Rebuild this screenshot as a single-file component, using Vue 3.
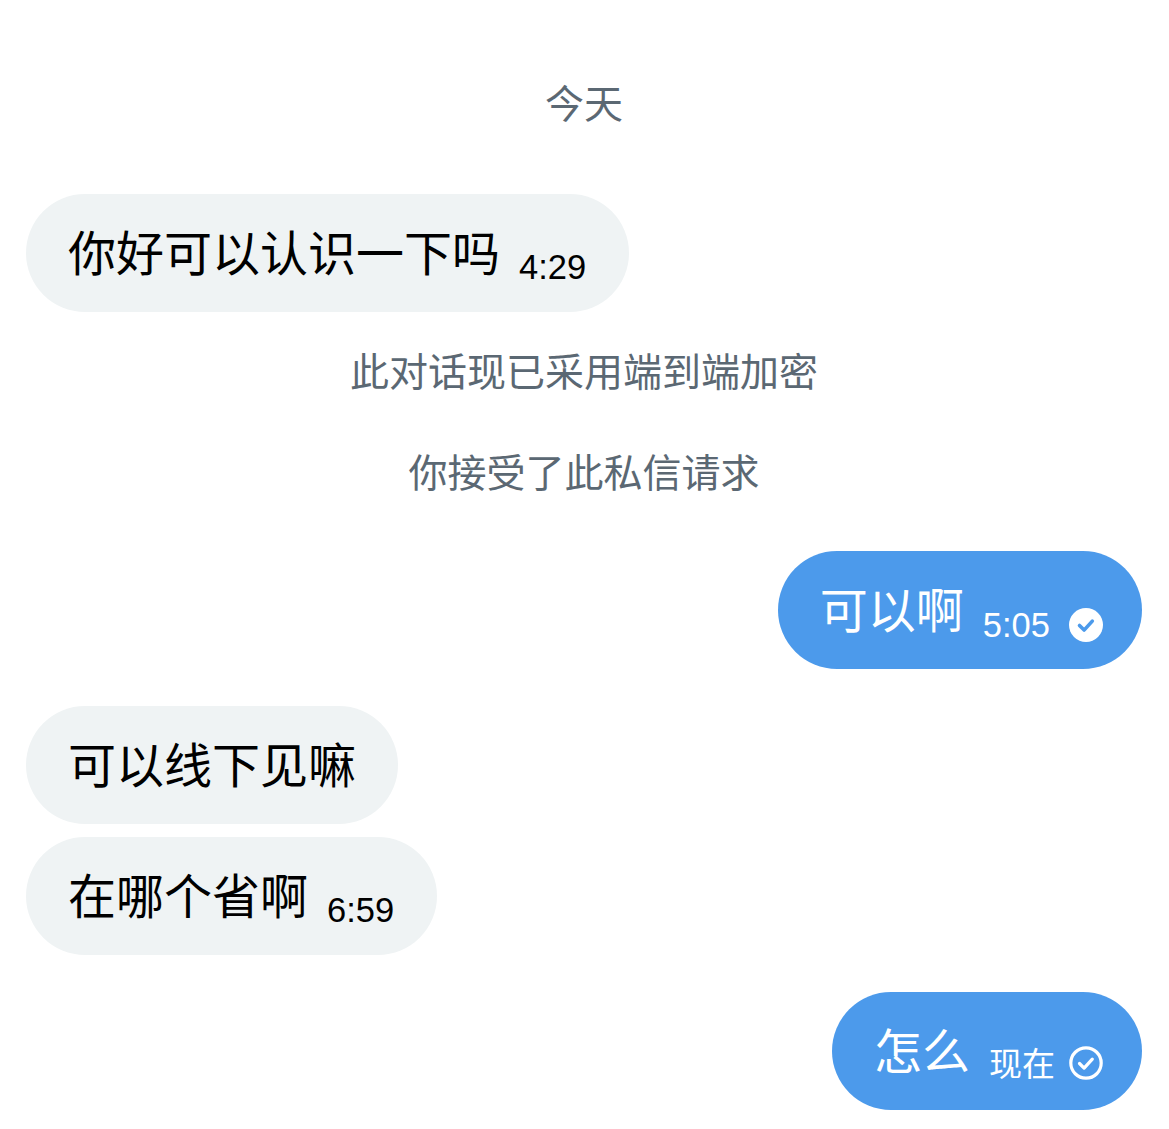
<script setup>
// DM thread: each entry is either a centred system line or a bubble.
const items = [
    { id: 1, kind: "system", text: "今天", gap: 74 },
    { id: 2, kind: "in", text: "你好可以认识一下吗", time: "4:29", gap: 60 },
    { id: 3, kind: "system", text: "此对话现已采用端到端加密", gap: 30 },
    { id: 4, kind: "system", text: "你接受了此私信请求", gap: 41 },
    { id: 5, kind: "out", text: "可以啊", time: "5:05", status: "read", gap: 48 },
    { id: 6, kind: "in", text: "可以线下见嘛", gap: 37 },
    { id: 7, kind: "in", text: "在哪个省啊", time: "6:59", gap: 13 },
    { id: 8, kind: "out", text: "怎么", time: "现在", status: "sent", gap: 37 },
];
</script>

<template>
    <main class="thread">
        <template v-for="item in items" :key="item.id">
            <p v-if="item.kind === 'system'" class="system" :style="{ marginTop: item.gap + 'px' }">
                {{ item.text }}
            </p>
            <div v-else class="row" :class="item.kind" :style="{ marginTop: item.gap + 'px' }">
                <div class="bubble">
                    <span class="text">{{ item.text }}</span>
                    <span v-if="item.time" class="time" :class="{ cjk: item.status === 'sent' }">{{ item.time }}</span>
                    <svg v-if="item.status" class="tick" :class="item.status" viewBox="0 0 34 34" aria-hidden="true">
                        <template v-if="item.status === 'read'">
                            <circle cx="17" cy="17" r="17" fill="#fff" />
                            <path d="M10.5 17.5l4.6 4.6 8.2-9" fill="none" stroke="#4c9aeb" stroke-width="3.6" stroke-linecap="round" stroke-linejoin="round" />
                        </template>
                        <template v-else>
                            <circle cx="17" cy="17" r="15.2" fill="none" stroke="#fff" stroke-width="3.2" />
                            <path d="M10.5 17.5l4.6 4.6 8.2-9" fill="none" stroke="#fff" stroke-width="3.2" stroke-linecap="round" stroke-linejoin="round" />
                        </template>
                    </svg>
                </div>
            </div>
        </template>
    </main>
</template>

<style>
body {
    background: #fff;
}
</style>

<style scoped>
.thread {
    display: flex;
    flex-direction: column;
    padding: 0 27px 19px 26px;
    font-family: "Noto Sans CJK SC", "Liberation Sans", sans-serif;
}
.system {
    margin: 0;
    height: 60px;
    line-height: 54px;
    text-align: center;
    font-size: 39px;
    color: #5b6873;
}
.row {
    display: flex;
}
.row.out {
    justify-content: flex-end;
}
.bubble {
    display: flex;
    align-items: center;
    height: 118px;
    border-radius: 59px;
    padding: 0 42px;
    background: #eff3f4;
    color: #000;
}
.out .bubble {
    background: #4c9aeb;
    color: #fff;
    padding-right: 39px;
}
.text {
    font-size: 48px;
    line-height: 60px;
    margin-top: -6px;
}
.time {
    margin: 28px 1px 0 19px;
    font-family: "Liberation Sans", "Noto Sans CJK SC", sans-serif;
    font-size: 34.5px;
    line-height: 40px;
}
.out .time {
    margin-top: 29px;
}
.out .time.cjk {
    font-family: "Noto Sans CJK SC", sans-serif;
    font-size: 33px;
    margin-top: 21px;
}
.tick {
    width: 34px;
    height: 34px;
    margin: 30px 0 0 18px;
    flex: none;
}
.tick.sent {
    margin: 24px 0 0 13px;
}
</style>
